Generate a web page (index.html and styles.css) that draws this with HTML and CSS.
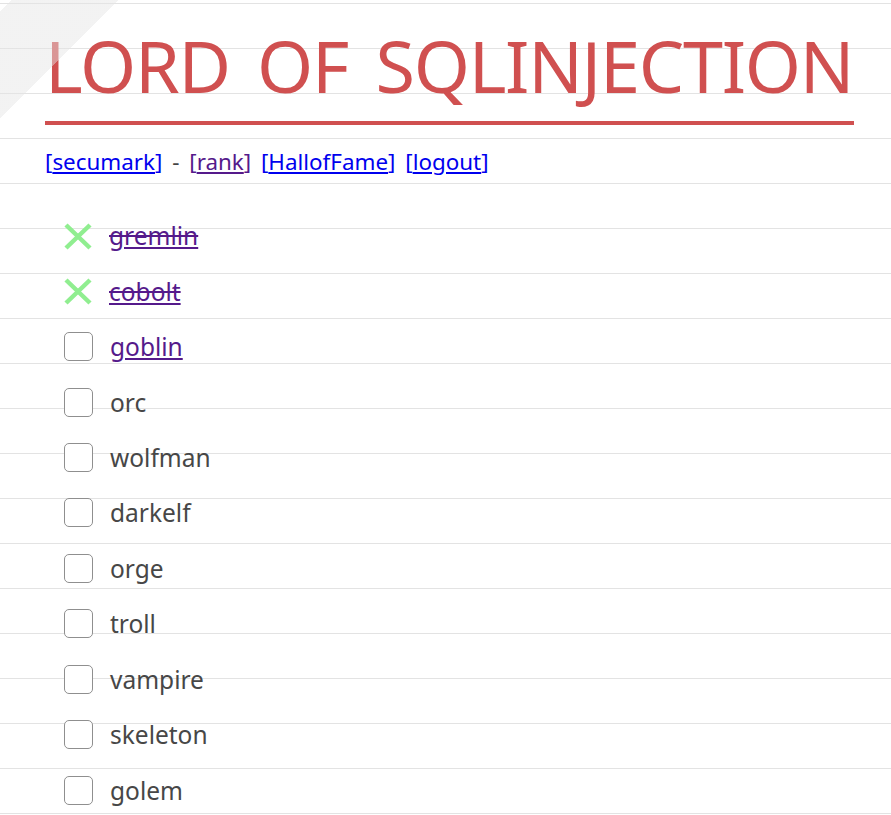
FILE: index.html
```html
<!DOCTYPE html>
<html lang="en">
<head>
  <meta charset="UTF-8" />
  <meta name="viewport" content="width=device-width, initial-scale=1.0" />
  <title>Lord of SQLInjection</title>
  <link rel="stylesheet" href="styles.css">
</head>
<body>
  <div class="ribbon"></div>

  <div class="wrap">
    <h1 class="title">LORD OF SQLINJECTION</h1>

    <!-- top menu -->
    <p class="menu">
      <a class="menu-link" href="#">[<span>secumark</span>]</a> - <a class="menu-link visited" href="#">[<span>rank</span>]</a> <a class="menu-link" href="#">[<span>HallofFame</span>]</a> <a class="menu-link" href="#">[<span>logout</span>]</a>
    </p>

    <!-- stage list -->
    <ul class="stages">
      <li class="stage">
        <svg class="mark" width="28" height="28" viewBox="0 0 28 28"><path d="M2 3 L26 26 M26 3 L2 26" stroke="#90ee90" stroke-width="4.5" fill="none"/></svg>
        <a class="stage-link cleared" href="#">gremlin</a>
      </li>
      <li class="stage">
        <svg class="mark" width="28" height="28" viewBox="0 0 28 28"><path d="M2 3 L26 26 M26 3 L2 26" stroke="#90ee90" stroke-width="4.5" fill="none"/></svg>
        <a class="stage-link cleared" href="#">cobolt</a>
      </li>
      <li class="stage"><span class="box"></span><a class="stage-link" href="#">goblin</a></li>
      <li class="stage"><span class="box"></span>orc</li>
      <li class="stage"><span class="box"></span>wolfman</li>
      <li class="stage"><span class="box"></span>darkelf</li>
      <li class="stage"><span class="box"></span>orge</li>
      <li class="stage"><span class="box"></span>troll</li>
      <li class="stage"><span class="box"></span>vampire</li>
      <li class="stage"><span class="box"></span>skeleton</li>
      <li class="stage"><span class="box"></span>golem</li>
    </ul>
  </div>
</body>
</html>
```

FILE: styles.css
```css
html {
  min-height: 100%;
  background: #fff repeating-linear-gradient(to bottom, transparent 0, transparent 3px, #e3e3e3 3px, #e3e3e3 4px, transparent 4px, transparent 45px);
}

body {
  margin: 0;
  font-family: "Noto Sans", "Open Sans", sans-serif;
  color: #474747;
}

.ribbon {
  position: absolute;
  top: 0;
  left: 0;
  width: 120px;
  height: 120px;
  pointer-events: none;
  z-index: 5;
  background: linear-gradient(135deg, transparent 5%, rgba(229, 229, 229, 0.47) 5%, rgba(229, 229, 229, 0.47) 49.2%, transparent 49.2%);
}

.wrap {
  padding: 0 37px 0 45px;
}

.title {
  margin: 0;
  padding: 29px 0 20px 0;
  font-size: 72px;
  line-height: 72px;
  font-weight: normal;
  letter-spacing: -1.3px;
  word-spacing: 10px;
  white-space: nowrap;
  color: #d05050;
  border-bottom: 4px solid #d05050;
}

.menu {
  margin: 22px 0 0 0;
  font-size: 22.4px;
  line-height: 30px;
  word-spacing: 4px;
  color: #444;
}

.menu-link {
  color: #0000ee;
  text-decoration: none;
}

.menu-link span {
  text-decoration: underline;
}

.menu-link.visited {
  color: #551a8b;
}

.stages {
  list-style: none;
  margin: 31px 0 0 0;
  padding: 0;
}

.stage {
  display: flex;
  align-items: center;
  gap: 17px;
  height: 55.44px;
  padding-left: 19px;
  font-size: 24.5px;
}

.mark {
  flex: none;
}

.box {
  flex: none;
  width: 27px;
  height: 27px;
  border: 1px solid #8f8f8f;
  border-radius: 5px;
  background: #fff;
}

.stage-link {
  color: #551a8b;
}

.stage-link.cleared {
  text-decoration: underline line-through;
}
```
